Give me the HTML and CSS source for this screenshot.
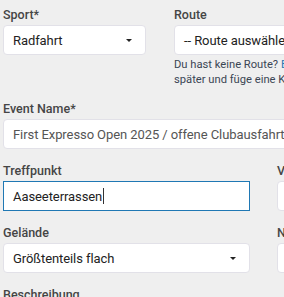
FILE: index.html
```html
<!DOCTYPE html>
<html lang="de">

<head>
  <meta charset="UTF-8" />
  <meta name="viewport" content="width=device-width, initial-scale=1.0" />
  <title>Event erstellen</title>
  <link rel="stylesheet" href="styles.css">
</head>

<body>
  <form class="event-form">
    <div class="row">
      <div class="field sport">
        <label>Sport*</label>
        <div class="select">
          <span>Radfahrt</span>
          <span class="caret"></span>
        </div>
      </div>
      <div class="field route">
        <label>Route</label>
        <div class="select">
          <span>-- Route auswählen --</span>
          <span class="caret"></span>
        </div>
        <p class="help">Du hast keine Route? <a href="#">Erstelle eine Route</a><br>
          später und füge eine Karte hinzu.</p>
      </div>
    </div>

    <div class="row">
      <div class="field full">
        <label>Event Name*</label>
        <div class="input muted">First Expresso Open 2025 / offene Clubausfahrt</div>
      </div>
    </div>

    <div class="row">
      <div class="field wide">
        <label>Treffpunkt</label>
        <div class="input focused">Aaseeterrassen<span class="cursor"></span></div>
      </div>
      <div class="field rest">
        <label>Veranstalter</label>
        <div class="input"></div>
      </div>
    </div>

    <div class="row">
      <div class="field wide">
        <label>Gelände</label>
        <div class="select">
          <span>Größtenteils flach</span>
          <span class="caret"></span>
        </div>
      </div>
      <div class="field rest">
        <label>Niveau</label>
        <div class="select"></div>
      </div>
    </div>

    <div class="row">
      <div class="field full">
        <label>Beschreibung</label>
      </div>
    </div>
  </form>
</body>

</html>
```

FILE: styles.css
```css
body {
  margin: 0;
  background: #efefef;
  font-family: Roboto, "Liberation Sans", sans-serif;
  color: #222;
  overflow: hidden;
}

.event-form {
  padding: 7px 0 0 3px;
  width: 420px;
}

.row {
  display: flex;
  gap: 28px;
}

.field {
  display: flex;
  flex-direction: column;
  margin-bottom: 14px;
}

.field label {
  font-size: 12.5px;
  line-height: 16px;
  font-weight: 500;
  color: #454545;
  margin-bottom: 2px;
}

.sport {
  width: 143px;
}

.route {
  width: 240px;
}

.full {
  width: 420px;
}

.wide {
  width: 247px;
}

.rest {
  width: 140px;
}

.row .rest {
  margin-left: -1px;
}

.select,
.input {
  box-sizing: border-box;
  height: 30px;
  background: #fff;
  border: 1px solid #e2e1e8;
  border-radius: 4px;
  display: flex;
  align-items: center;
  padding: 0 13px 0 9px;
  font-size: 13px;
  letter-spacing: -0.08px;
  white-space: nowrap;
  overflow: hidden;
}

.select span:first-child {
  flex: 1;
}

.caret {
  width: 0;
  height: 0;
  border-left: 3.5px solid transparent;
  border-right: 3.5px solid transparent;
  border-top: 3.5px solid #222;
}

.muted {
  color: #555;
}

.focused {
  border: 1px solid #1f78b4;
  border-radius: 0;
}

.cursor {
  display: inline-block;
  width: 1px;
  height: 16px;
  background: #333;
  margin-left: 1px;
}

.help {
  margin: 3px 0 0;
  font-size: 11.2px;
  line-height: 14.5px;
  color: #3b4654;
}

.help a {
  color: #1f78b4;
  text-decoration: none;
}
```
